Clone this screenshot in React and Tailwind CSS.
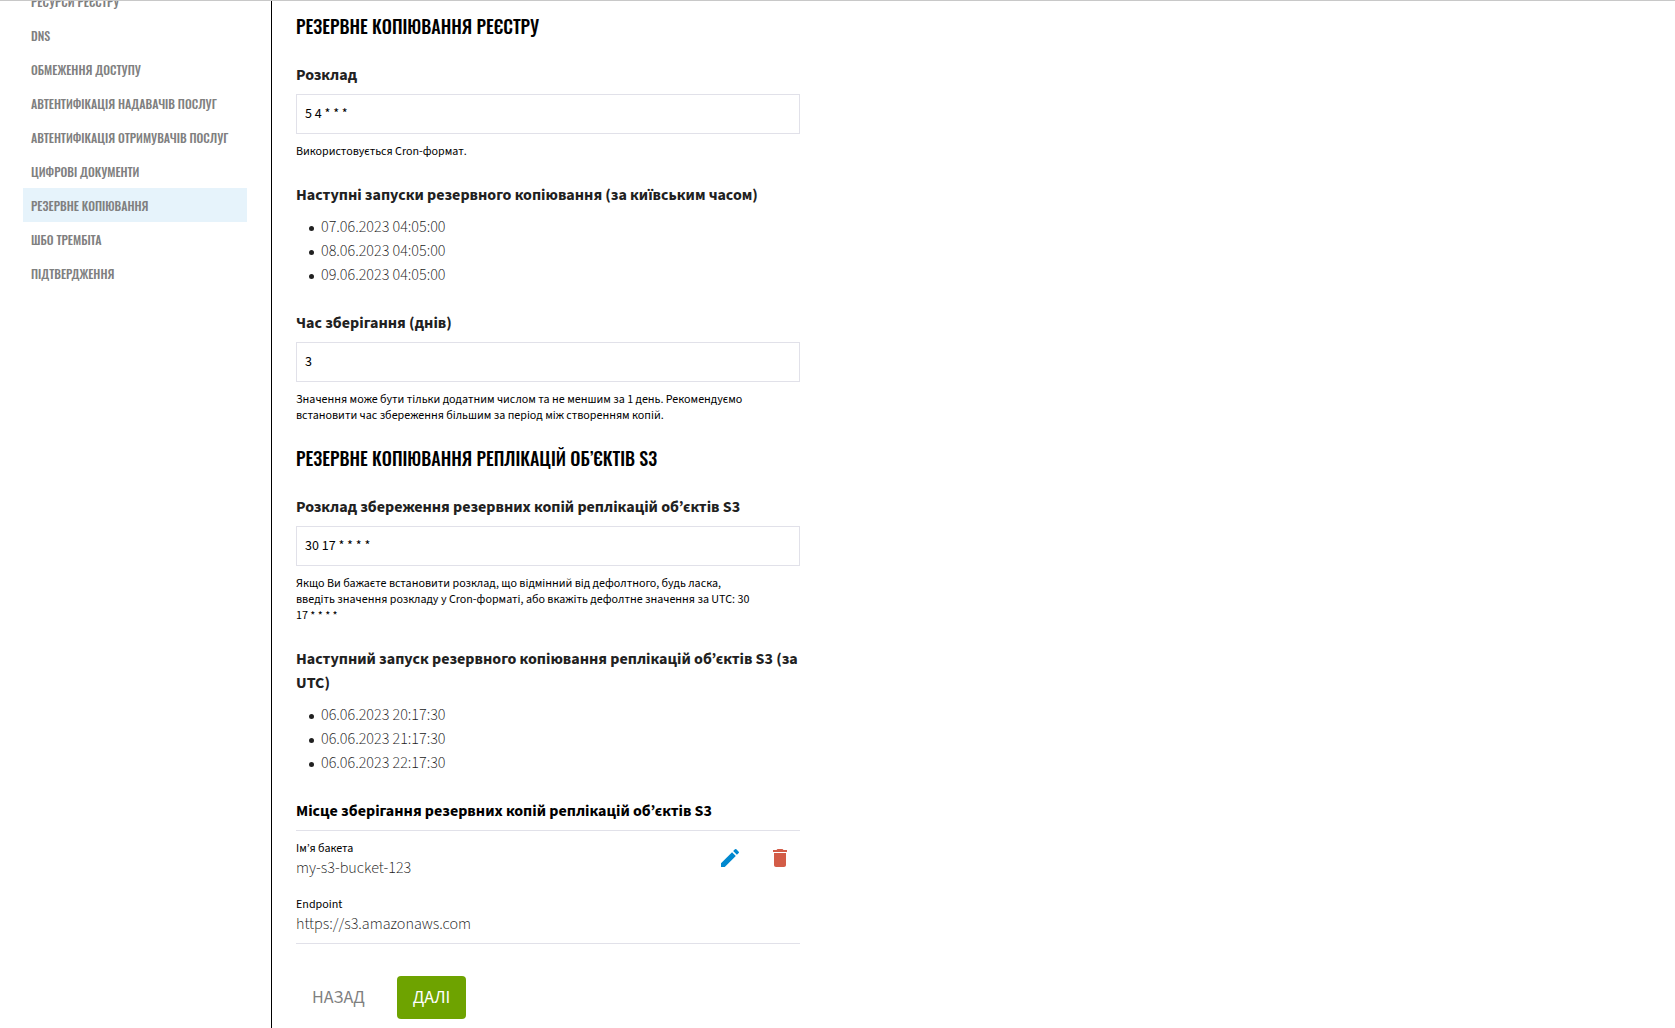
const navItems = [
  'Ресурси реєстру',
  'DNS',
  'Обмеження доступу',
  'Автентифікація надавачів послуг',
  'Автентифікація отримувачів послуг',
  'Цифрові документи',
  'Резервне копіювання',
  'ШБО Трембіта',
  'Підтвердження',
];

const ACTIVE = 'Резервне копіювання';

function Sidebar() {
  return (
    <aside className="w-[272px] shrink-0 overflow-hidden border-r border-black pl-[23px] pr-6">
      <nav className="-mt-[17px]">
        <ul>
          {navItems.map((item) => (
            <li key={item}>
              <a
                href="#"
                aria-current={item === ACTIVE ? 'page' : undefined}
                className={`block px-2 pt-0.5 font-[Oswald,sans-serif] text-xs leading-8 font-medium whitespace-nowrap text-[#808080] uppercase ${
                  item === ACTIVE ? 'bg-[#e6f3fb]' : ''
                }`}
              >
                {item}
              </a>
            </li>
          ))}
        </ul>
      </nav>
    </aside>
  );
}

function SectionTitle({ children }) {
  return (
    <h2 className="font-[Oswald,sans-serif] text-lg leading-[26px] font-medium text-black uppercase">{children}</h2>
  );
}

function Field({ id, label, defaultValue, hint }) {
  return (
    <div className="mt-6">
      <label htmlFor={id} className="block leading-6 font-bold">
        {label}
      </label>
      <input
        id={id}
        type="text"
        defaultValue={defaultValue}
        className="mt-[7px] block h-10 w-full border border-[#e1e1e9] bg-white px-2 text-sm text-black outline-none"
      />
      <p className="mt-[10px] pr-10 text-xs leading-4 text-black">{hint}</p>
    </div>
  );
}

function Runs({ title, dates }) {
  return (
    <div className="mt-[23px]">
      <h3 className="leading-6 font-bold">{title}</h3>
      <ul className="mt-2 pl-[13px] leading-6 font-light">
        {dates.map((d) => (
          <li
            key={d}
            className="flex items-center gap-[7px] before:mt-[3px] before:size-[5px] before:rounded-full before:bg-[#212121] before:content-['']"
          >
            {d}
          </li>
        ))}
      </ul>
    </div>
  );
}

function Detail({ term, value }) {
  return (
    <div>
      <dt className="text-xs leading-4 text-black">{term}</dt>
      <dd className="leading-[22px] font-light">{value}</dd>
    </div>
  );
}

function PencilIcon() {
  return (
    <svg viewBox="0 0 24 24" className="size-6" fill="#0088cf" aria-hidden="true">
      <path d="M3 17.25V21h3.75L17.81 9.94l-3.75-3.75L3 17.25zM20.71 7.04a1 1 0 0 0 0-1.41l-2.34-2.34a1 1 0 0 0-1.41 0l-1.83 1.83 3.75 3.75 1.83-1.83z" />
    </svg>
  );
}

function TrashIcon() {
  return (
    <svg viewBox="0 0 24 24" className="size-6" fill="#d35c47" aria-hidden="true">
      <path d="M6 19c0 1.1.9 2 2 2h8c1.1 0 2-.9 2-2V7H6v12zM19 4h-3.5l-1-1h-5l-1 1H5v2h14V4z" />
    </svg>
  );
}

export default function App() {
  return (
    <div className="flex h-screen flex-col overflow-hidden border-t border-[#c8c8c8] bg-white font-['Source_Sans_3',sans-serif] text-base text-[#212121]">
      <div className="flex min-h-0 flex-1">
        <Sidebar />
        <main className="min-w-0 flex-1 overflow-hidden px-6 pt-3">
          <form className="max-w-[504px]" onSubmit={(e) => e.preventDefault()}>
            <section>
              <SectionTitle>Резервне копіювання реєстру</SectionTitle>
              <Field id="schedule" label="Розклад" defaultValue="5 4 * * *" hint="Використовується Cron-формат." />
              <Runs
                title="Наступні запуски резервного копіювання (за київським часом)"
                dates={['07.06.2023 04:05:00', '08.06.2023 04:05:00', '09.06.2023 04:05:00']}
              />
              <Field
                id="retention"
                label="Час зберігання (днів)"
                defaultValue="3"
                hint="Значення може бути тільки додатним числом та не меншим за 1 день. Рекомендуємо встановити час збереження більшим за період між створенням копій."
              />
            </section>

            <section className="mt-[21px]">
              <SectionTitle>Резервне копіювання реплікацій об’єктів S3</SectionTitle>
              <Field
                id="s3-schedule"
                label="Розклад збереження резервних копій реплікацій об’єктів S3"
                defaultValue="30 17 * * * *"
                hint="Якщо Ви бажаєте встановити розклад, що відмінний від дефолтного, будь ласка, введіть значення розкладу у Cron-форматі, або вкажіть дефолтне значення за UTC: 30 17 * * * *"
              />
              <Runs
                title="Наступний запуск резервного копіювання реплікацій об’єктів S3 (за UTC)"
                dates={['06.06.2023 20:17:30', '06.06.2023 21:17:30', '06.06.2023 22:17:30']}
              />
            </section>

            <section className="mt-6">
              <h3 className="leading-6 font-bold text-black">Місце зберігання резервних копій реплікацій об’єктів S3</h3>
              <div className="mt-[7px] flex items-start justify-between border-y border-[#e1e1e9] pt-[10px] pr-2 pb-2">
                <dl className="flex flex-col gap-[18px]">
                  <Detail term="Ім’я бакета" value="my-s3-bucket-123" />
                  <Detail term="Endpoint" value="https://s3.amazonaws.com" />
                </dl>
                <div className="flex gap-[26px] pt-[5px]">
                  <button type="button" aria-label="Редагувати">
                    <PencilIcon />
                  </button>
                  <button type="button" aria-label="Видалити">
                    <TrashIcon />
                  </button>
                </div>
              </div>
            </section>

            <div className="mt-8 flex gap-4 text-lg leading-[27px]">
              <button type="button" className="px-4 py-2 text-[#808080] uppercase">
                Назад
              </button>
              <button type="submit" className="rounded bg-[#6ea300] px-4 py-2 text-white uppercase">
                Далі
              </button>
            </div>
          </form>
        </main>
      </div>
    </div>
  );
}
